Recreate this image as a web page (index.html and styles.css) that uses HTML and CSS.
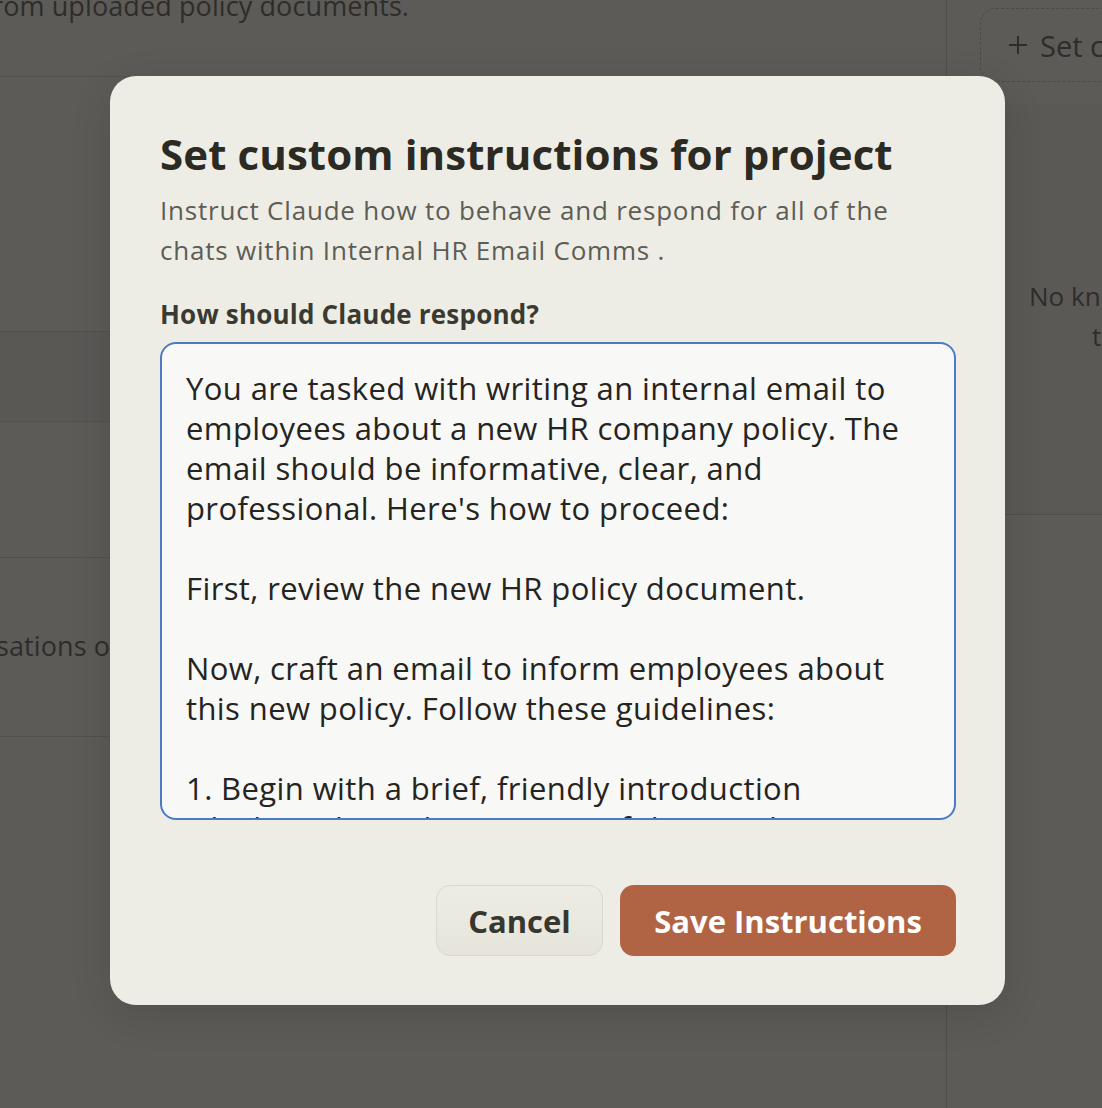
FILE: index.html
```html
<!DOCTYPE html>
<html lang="en">
<head>
<meta charset="utf-8">
<title>Set custom instructions</title>
<link rel="stylesheet" href="styles.css">
</head>
<body>
<div class="page">
  <main class="main">
    <div class="row row-top"><p class="cut-text">rom uploaded policy documents.</p></div>
    <div class="row row-a"></div>
    <div class="row row-b"></div>
    <div class="row row-c"></div>
    <div class="row row-d"><p class="cut-text">sations o</p></div>
    <div class="row row-e"></div>
  </main>
  <aside class="side">
    <div class="dashed-card">
      <svg class="plus-icon" width="20" height="20" viewBox="0 0 20 20" aria-hidden="true"><path d="M10 1v18M1 10h18" stroke="#2e2d2a" stroke-width="2" fill="none"/></svg>
      <span>Set c</span>
    </div>
    <div class="empty-card">
      <p class="empty-text">No kn<br><span class="empty-t">t</span></p>
    </div>
  </aside>
</div>

<div class="modal" role="dialog">
  <h1 class="modal-title">Set custom instructions for project</h1>
  <p class="modal-sub">Instruct Claude how to behave and respond for all of the<br>chats within Internal HR Email Comms .</p>
  <label class="field-label">How should Claude respond?</label>
  <div class="textarea">
    <div class="ta-text">You are tasked with writing an internal email to
employees about a new HR company policy. The
email should be informative, clear, and
professional. Here's how to proceed:

First, review the new HR policy document.

Now, craft an email to inform employees about
this new policy. Follow these guidelines:

1. Begin with a brief, friendly introduction
which explains the purpose of the email.</div>
  </div>
  <div class="actions">
    <button class="btn btn-cancel">Cancel</button>
    <button class="btn btn-save">Save Instructions</button>
  </div>
</div>
</body>
</html>
```
FILE: styles.css
```css
html, body {
  margin: 0;
  padding: 0;
}
body {
  width: 1102px;
  height: 1108px;
  overflow: hidden;
  background: #5c5b58;
  font-family: "Open Sans", "Noto Sans", sans-serif;
  position: relative;
}
.page {
  display: grid;
  grid-template-columns: 947px 1fr;
  height: 1108px;
}
.main {
  display: flex;
  flex-direction: column;
  border-right: 1px solid #4f4e4b;
}
.row {
  border-bottom: 1px solid #52514e;
  flex: none;
}
.row-top { height: 76px; }
.row-a { height: 254px; }
.row-b { height: 89px; background: #595855; }
.row-c { height: 135px; }
.row-d { height: 178px; }
.row-e { flex: 1; border-bottom: none; }
.cut-text {
  margin: 0;
  font-size: 27px;
  letter-spacing: 0.1px;
  color: #2e2d2a;
  white-space: nowrap;
}
.row-top .cut-text { margin-top: -13px; margin-left: -8px; }
.row-d .cut-text { margin-top: 69px; margin-left: -4px; }

.side {
  padding: 8px 0 0 33px;
  display: flex;
  flex-direction: column;
  gap: 22px;
}
.dashed-card {
  height: 74px;
  box-sizing: border-box;
  border: 1px dashed #4c4b48;
  border-right: none;
  border-radius: 16px 0 0 16px;
  display: flex;
  align-items: center;
  gap: 12px;
  padding-left: 27px;
  font-size: 29px;
  color: #2e2d2a;
  white-space: nowrap;
  overflow: hidden;
}
.plus-icon { flex: none; }
.empty-card {
  height: 410px;
  background: #5a5956;
  border-bottom: 1px solid #4f4e4b;
  margin-left: -33px;
  padding-left: 82px;
}
.empty-text {
  margin: 172px 0 0;
  font-size: 26px;
  line-height: 40px;
  color: #2e2d2a;
  white-space: nowrap;
}
.empty-t { margin-left: 63px; }

.modal {
  position: absolute;
  left: 110px;
  top: 76px;
  width: 895px;
  height: 929px;
  box-sizing: border-box;
  background: #eeede5;
  border-radius: 26px;
  box-shadow: 0 10px 40px rgba(0, 0, 0, 0.12);
  padding: 36px 49px 0 50px;
  display: flex;
  flex-direction: column;
}
.modal-title {
  margin: 0;
  font-size: 42px;
  line-height: 84px;
  font-weight: 700;
  letter-spacing: 0.1px;
  color: #2b2a23;
  white-space: nowrap;
}
.modal-sub {
  margin: -6px 0 0;
  font-size: 26px;
  line-height: 40px;
  letter-spacing: 0.8px;
  color: #5d5c55;
  white-space: nowrap;
}
.field-label {
  margin-top: 29px;
  font-size: 26px;
  line-height: 30px;
  font-weight: 700;
  letter-spacing: 0.2px;
  color: #3b3a31;
}
.textarea {
  margin-top: 13px;
  height: 478px;
  box-sizing: border-box;
  border: 2px solid #4a7bc4;
  border-radius: 16px;
  background: #f8f8f7;
  padding: 24px 24px 0 24px;
  overflow: hidden;
}
.ta-text {
  white-space: pre;
  font-size: 31px;
  line-height: 40px;
  letter-spacing: 0.4px;
  color: #25241f;
}
.actions {
  display: flex;
  justify-content: flex-end;
  gap: 17px;
  margin-top: 65px;
}
.btn {
  height: 71px;
  border-radius: 14px;
  font-family: inherit;
  font-size: 31px;
  font-weight: 700;
  cursor: pointer;
}
.btn-cancel {
  width: 167px;
  background: linear-gradient(#eeede5, #e6e4da);
  border: 1px solid #dbd8cc;
  color: #38372f;
}
.btn-save {
  width: 336px;
  background: #b06444;
  border: none;
  color: #ffffff;
}
```
